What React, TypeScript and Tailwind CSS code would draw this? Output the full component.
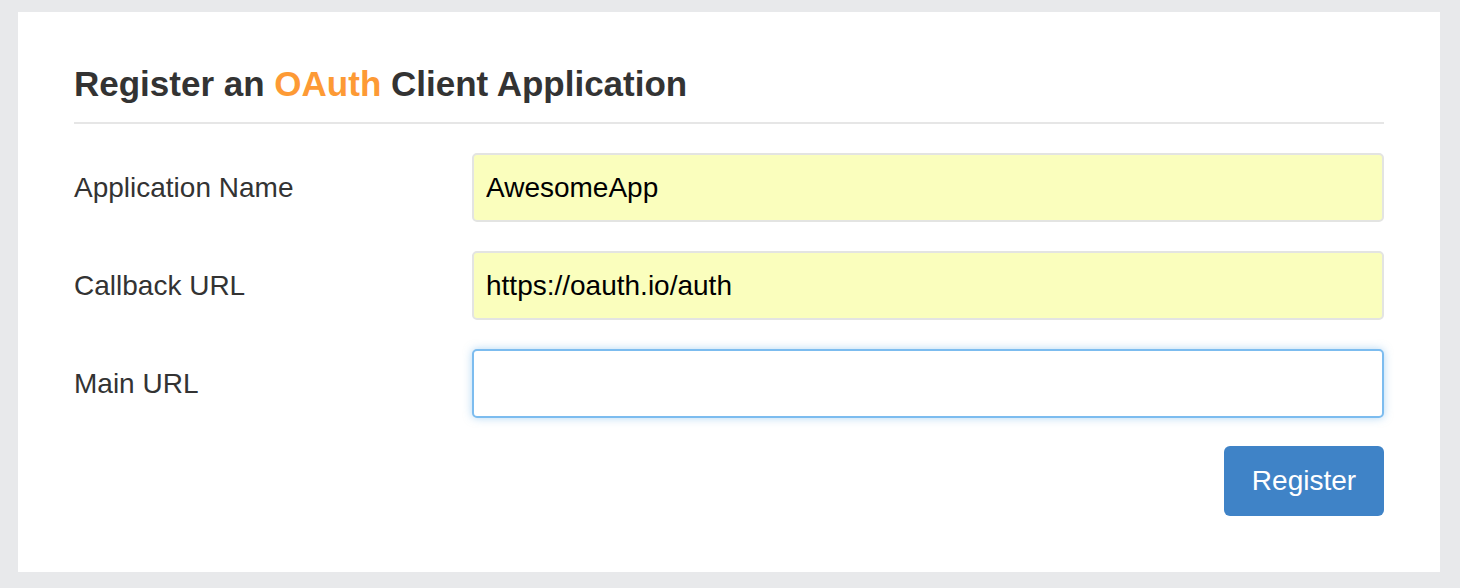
export default function App() {
  return (
    <div className="min-h-[588px] bg-[#e8e9eb] pl-[18px] pr-[20px] pt-[12px] pb-[16px] font-['Liberation_Sans',Arial,sans-serif]">
      <div className="bg-white px-[56px] pt-[47px] h-[560px]">
        <h3 className="text-[35px] leading-[50px] font-bold text-[#333] pb-[13px] border-b-2 border-[#e6e6e6]">
          Register an <span className="text-[#fd9a35]">OAuth</span> Client Application
        </h3>

        <form className="mt-[29px] flex flex-col gap-[29px]">
          <div className="flex items-center">
            <label className="w-[398px] text-[28px] text-[#333]">Application Name</label>
            <input
              className="flex-1 h-[69px] rounded-[5px] border-2 border-[#e3e4e2] bg-[#fafebd] px-[12px] text-[28px] text-black outline-none"
              defaultValue="AwesomeApp"
              type="text"
            />
          </div>
          <div className="flex items-center">
            <label className="w-[398px] text-[28px] text-[#333]">Callback URL</label>
            <input
              className="flex-1 h-[69px] rounded-[5px] border-2 border-[#e3e4e2] bg-[#fafebd] px-[12px] text-[28px] text-black outline-none"
              defaultValue="https://oauth.io/auth"
              type="text"
            />
          </div>
          <div className="flex items-center">
            <label className="w-[398px] text-[28px] text-[#333]">Main URL</label>
            <input
              className="flex-1 h-[69px] rounded-[5px] border-2 border-[#7cbcef] bg-white px-[12px] text-[28px] text-black outline-none shadow-[0_0_8px_rgba(102,175,233,0.5)]"
              type="text"
            />
          </div>
        </form>

        <div className="flex justify-end mt-[28px]">
          <button className="w-[160px] h-[70px] rounded-[6px] bg-[#3f83c7] text-white text-[28px]">
            Register
          </button>
        </div>
      </div>
    </div>
  );
}
